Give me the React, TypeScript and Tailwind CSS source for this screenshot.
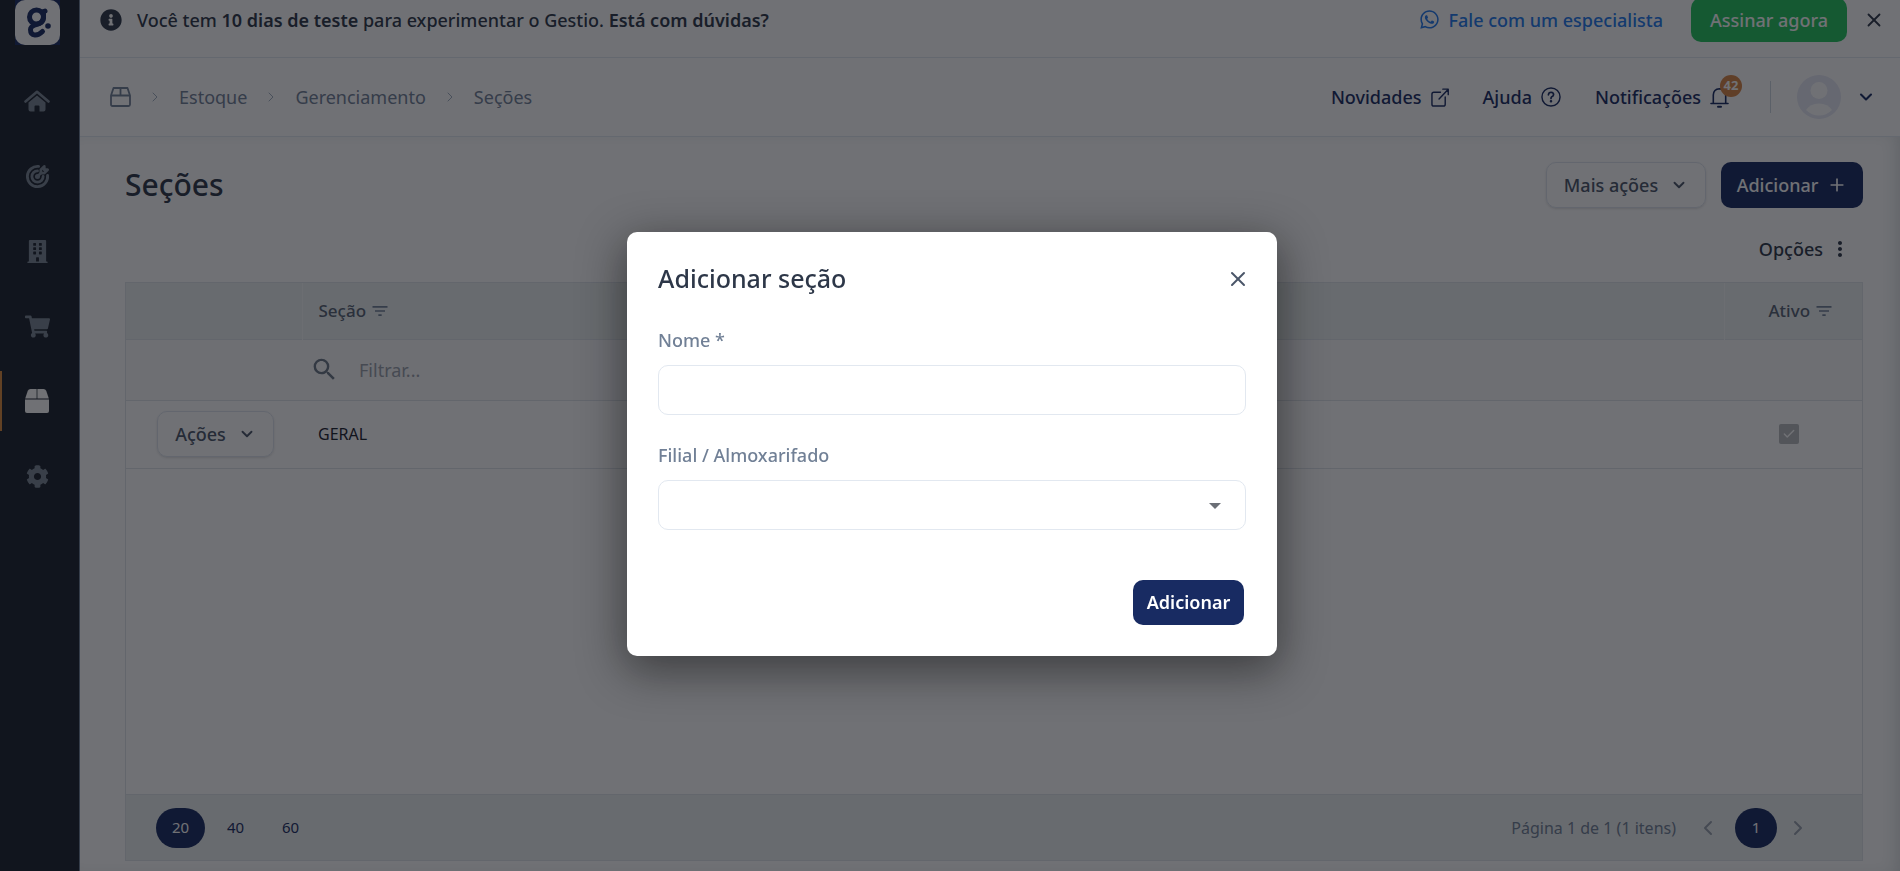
import { useState } from 'react'
import type { ReactNode } from 'react'
import { ChevronDown, ChevronLeft, ChevronRight, Check, Plus, X } from 'lucide-react'
import { FaBuilding, FaCog, FaInfoCircle, FaShoppingCart, FaWhatsapp } from 'react-icons/fa'
import { MdFilterList, MdMoreVert, MdSearch } from 'react-icons/md'
import { TbTargetArrow } from 'react-icons/tb'

function Logo() {
  return (
    <svg width="45" height="45" viewBox="0 0 45 45" className="bg-[#182b62]">
      <rect width="45" height="45" rx="10" fill="#fff" />
      <g fill="none" stroke="#182b62" strokeWidth="5" strokeLinecap="round">
        <circle cx="21.5" cy="17" r="7" />
        <path d="M28.5 17V11.5L30 11" />
        <path d="M28.5 17C28.5 27 15.5 22.5 15.5 29.5C15.5 37 23 36 27.5 31.5" />
      </g>
      <circle cx="33" cy="26" r="2.8" fill="#182b62" />
    </svg>
  )
}

function HomeIcon() {
  return (
    <svg width="26" height="22" viewBox="0 0 26 22">
      <path d="M1.5 11.5L13 1.8L24.5 11.5" fill="none" stroke="currentColor" strokeWidth="2.6" strokeLinecap="round" strokeLinejoin="round" />
      <path d="M4.5 12.5L13 5.5L21.5 12.5V19.5Q21.5 21.5 19.5 21.5H15.5V16.5Q15.5 15.5 14.5 15.5H11.5Q10.5 15.5 10.5 16.5V21.5H6.5Q4.5 21.5 4.5 19.5Z" fill="currentColor" />
    </svg>
  )
}

function BoxIcon() {
  return (
    <svg width="24" height="24" viewBox="0 0 24 24" fill="currentColor">
      <path d="M11.6 0V9.5H0.2L2.8 1.8Q3.5 0 5.5 0Z" />
      <path d="M12.4 0V9.5H23.8L21.2 1.8Q20.5 0 18.5 0Z" />
      <path d="M0 10.5H24V22Q24 24 22 24H2Q0 24 0 22Z" />
    </svg>
  )
}

function BoxOutlineIcon() {
  return (
    <svg width="21" height="20" viewBox="0 0 21 20" fill="none" stroke="currentColor" strokeWidth="1.8" strokeLinejoin="round">
      <path d="M1 8.5L3.5 1H17.5L20 8.5V17.5Q20 19 18.5 19H2.5Q1 19 1 17.5Z" />
      <path d="M1 8.5H20M10.5 1V8.5" />
    </svg>
  )
}

function ExternalIcon() {
  return (
    <svg width="18" height="19" viewBox="0 0 19 20" fill="none" stroke="currentColor" strokeWidth="1.5" strokeLinecap="round" strokeLinejoin="round">
      <path d="M10 4.5H3Q1 4.5 1 6.5V17Q1 19 3 19H13Q15 19 15 17V9.5" />
      <path d="M8.5 11.5L18 1.5M12.5 1.2H18.2V7" />
    </svg>
  )
}

function HelpIcon() {
  return (
    <svg width="20" height="20" viewBox="0 0 21 21" fill="none" stroke="currentColor" strokeWidth="1.5" strokeLinecap="round">
      <circle cx="10.5" cy="10.5" r="9.5" />
      <path d="M7.8 8.2Q8 5.5 10.6 5.5Q13.3 5.7 13.2 8Q13 9.6 11.3 10.3Q10.5 10.7 10.5 12" strokeWidth="1.8" />
      <circle cx="10.5" cy="15" r="0.6" fill="currentColor" />
    </svg>
  )
}

function BellIcon() {
  return (
    <svg width="19" height="21" viewBox="0 0 19 21" fill="none" stroke="currentColor" strokeWidth="1.6" strokeLinecap="round" strokeLinejoin="round">
      <path d="M1 16.5H18M3.3 16.5V8Q3.5 2 9.5 1.7Q15.5 2 15.7 8V16.5" />
      <path d="M8 19.8H11" strokeWidth="2" />
    </svg>
  )
}

function AvatarIcon() {
  return (
    <svg width="44" height="44" viewBox="0 0 44 44">
      <circle cx="22" cy="22" r="22" fill="#e6e9f5" />
      <circle cx="22" cy="15.5" r="8.5" fill="#fff" />
      <path d="M9 35Q13 28.5 22 28.5Q31 28.5 35 35Q29.5 40.5 22 40.5Q14.5 40.5 9 35Z" fill="#fff" />
    </svg>
  )
}

const menu: { label: string; icon: ReactNode; active?: boolean }[] = [
  { label: 'Início', icon: <HomeIcon /> },
  { label: 'Metas', icon: <TbTargetArrow size={27} strokeWidth={2.5} /> },
  { label: 'Empresa', icon: <FaBuilding size={23} /> },
  { label: 'Vendas', icon: <FaShoppingCart size={25} /> },
  { label: 'Estoque', icon: <BoxIcon />, active: true },
  { label: 'Configurações', icon: <FaCog size={23} /> },
]

function Sidebar() {
  return (
    <nav className="w-20 shrink-0 bg-[#1a202c] border-r border-[#718096] flex flex-col">
      <a href="#" aria-label="Gestio" className="self-start ml-[15px]">
        <Logo />
      </a>
      <div className="mt-[26px] flex flex-col gap-[15px]">
        {menu.map((item) => (
          <a
            key={item.label}
            href="#"
            aria-label={item.label}
            className={`h-[60px] pr-[7px] flex items-center justify-center border-l-2 ${item.active ? 'border-[#dd8a3c] text-white' : 'border-transparent text-[#7b8794]'}`}
          >
            {item.icon}
          </a>
        ))}
      </div>
    </nav>
  )
}

function TrialBanner() {
  return (
    <div className="h-[58px] pb-[18px] pl-5 pr-[15px] flex items-center border-b border-[#e2e8f0] text-lg font-medium text-[#2d3748]">
      <FaInfoCircle size={22} />
      <p className="ml-[15px] flex-1">
        Você tem <b className="font-semibold">10 dias de teste</b> para experimentar o Gestio. <b className="font-semibold">Está com dúvidas?</b>
      </p>
      <a href="#" className="flex items-center gap-[9px] text-[#2079ee]">
        <FaWhatsapp size={21} /> Fale com um especialista
      </a>
      <button className="ml-7 h-11 w-[156px] shrink-0 rounded-[10px] bg-[#22c55e] text-white">Assinar agora</button>
      <button aria-label="Fechar aviso" className="ml-4">
        <X size={22} />
      </button>
    </div>
  )
}

function Header() {
  return (
    <header className="h-[79px] pl-[30px] pr-6 flex items-center border-b border-[#e2e8f0] text-lg">
      <nav className="flex flex-1 items-center gap-4 text-[#718096]">
        <BoxOutlineIcon />
        {['Estoque', 'Gerenciamento', 'Seções'].map((crumb) => (
          <span key={crumb} className="flex items-center gap-4">
            <ChevronRight size={16} strokeWidth={1.5} className="text-[#a0aec0]" />
            <a href="#">{crumb}</a>
          </span>
        ))}
      </nav>
      <div className="flex items-center gap-[34px] font-medium text-[#182b62]">
        <a href="#" className="flex items-center gap-[9px]">
          Novidades <ExternalIcon />
        </a>
        <a href="#" className="flex items-center gap-[9px]">
          Ajuda <HelpIcon />
        </a>
        <button className="flex items-center gap-[9px]">
          Notificações
          <span className="relative">
            <BellIcon />
            <span className="absolute -top-3 left-[10px] size-[22px] rounded-full bg-[#d98545] text-white text-[13px] font-bold flex items-center justify-center">42</span>
          </span>
        </button>
      </div>
      <div className="ml-[41px] mr-[26px] w-px h-8 bg-[#cbd5e0]" />
      <button aria-label="Conta" className="flex items-center gap-[15px] text-[#182b62]">
        <AvatarIcon />
        <ChevronDown size={20} strokeWidth={2.5} />
      </button>
    </header>
  )
}

function SectionsTable() {
  return (
    <div className="flex-1 flex flex-col border border-[#dfe4ea]">
      <table className="w-full table-fixed text-[17px]">
        <colgroup>
          <col className="w-[176px]" />
          <col />
          <col className="w-[138px]" />
        </colgroup>
        <thead>
          <tr className="h-14 bg-[#ecf1f0] border-b border-[#dfe4ea] text-[#566273]">
            <th className="border-r border-[#f6f8f8]" />
            <th className="pl-4 border-r border-[#f6f8f8] text-left font-medium">
              <span className="flex items-center gap-1">
                Seção <MdFilterList size={20} className="text-[#718096]" />
              </span>
            </th>
            <th className="font-medium">
              <span className="flex items-center justify-center gap-1 pl-4">
                Ativo <MdFilterList size={20} className="text-[#718096]" />
              </span>
            </th>
          </tr>
        </thead>
        <tbody>
          <tr className="h-[61px] border-b border-[#dfe4ea] bg-[#fafafb]">
            <td />
            <td className="pl-2">
              <label className="flex items-center gap-5">
                <MdSearch size={29} className="text-[#6b7785]" />
                <input placeholder="Filtrar..." aria-label="Filtrar seção" className="flex-1 text-lg outline-none placeholder:text-[#9aa1ab]" />
              </label>
            </td>
            <td />
          </tr>
          <tr className="h-[68px] border-b border-[#dfe4ea]">
            <td className="pl-[31px]">
              <button className="h-[46px] w-[117px] flex items-center justify-center gap-3 rounded-[10px] border border-[#dfe5ee] shadow-sm text-lg font-medium text-[#4a5568]">
                Ações <ChevronDown size={18} strokeWidth={2.5} />
              </button>
            </td>
            <td className="pl-4 text-base text-[#1a202c]">GERAL</td>
            <td className="pr-2">
              <span className="relative mx-auto block size-5">
                <input type="checkbox" checked disabled aria-label="Ativo" className="block size-5 appearance-none rounded-xs bg-[#b9bbbd]" />
                <Check size={14} strokeWidth={2.5} className="absolute left-[3px] top-[3px] text-white" />
              </span>
            </td>
          </tr>
        </tbody>
      </table>
      <div className="flex-1" />
      <div className="h-[66px] pl-[30px] pr-[52px] flex items-center bg-[#ecf1f0] border-t border-[#dfe4ea] text-[15px] text-[#182b62]">
        <div className="flex flex-1 gap-[6px]">
          <button className="h-10 w-[49px] rounded-[20px] bg-[#182b62] text-white">20</button>
          <button className="h-10 w-[49px]">40</button>
          <button className="h-10 w-[49px]">60</button>
        </div>
        <span className="text-base text-[#718096]">Página 1 de 1 (1 itens)</span>
        <button aria-label="Anterior" className="ml-5 mr-[15px] text-[#97a1ad]">
          <ChevronLeft size={24} />
        </button>
        <button className="h-10 w-[42px] rounded-full bg-[#182b62] text-white">1</button>
        <button aria-label="Próxima" className="ml-[9px] text-[#97a1ad]">
          <ChevronRight size={24} />
        </button>
      </div>
    </div>
  )
}

function AddSectionModal({ onClose }: { onClose: () => void }) {
  return (
    <div className="fixed inset-0 flex items-center justify-center bg-[#0c0e15]/59 pt-4 pl-1">
      <div role="dialog" aria-labelledby="modal-title" className="w-[650px] rounded-[10px] bg-white px-[31px] pt-[30px] pb-[31px] shadow-[0_12px_46px_4px_rgba(0,0,0,0.45)]">
        <div className="flex h-[34px] items-center justify-between">
          <h2 id="modal-title" className="text-[25px] font-medium text-[#2d3748]">Adicionar seção</h2>
          <button aria-label="Fechar" onClick={onClose} className="-mr-1 text-[#4a5568]">
            <X size={24} />
          </button>
        </div>
        <form onSubmit={(e) => e.preventDefault()}>
          <label htmlFor="nome" className="mt-8 block text-lg leading-6 font-medium text-[#718096]">Nome *</label>
          <input id="nome" className="mt-[13px] block h-[50px] w-full rounded-[10px] border border-[#e2e8f0] px-4 outline-none" />
          <label htmlFor="filial" className="mt-7 block text-lg leading-6 font-medium text-[#718096]">Filial / Almoxarifado</label>
          <div className="relative mt-[13px]">
            <select id="filial" className="block h-[50px] w-full appearance-none rounded-[10px] border border-[#e2e8f0] px-4 outline-none" />
            <svg width="12" height="6" viewBox="0 0 12 6" className="pointer-events-none absolute right-[25px] top-[23px] text-[#6b6f76]">
              <path d="M0 0H12L6 6Z" fill="currentColor" />
            </svg>
          </div>
          <div className="mt-[50px] flex justify-end pr-0.5">
            <button className="h-[45px] w-[111px] rounded-[10px] bg-[#182b62] text-lg font-semibold text-white">Adicionar</button>
          </div>
        </form>
      </div>
    </div>
  )
}

export default function App() {
  const [open, setOpen] = useState(true)

  return (
    <div className="flex min-h-screen bg-white font-['Noto_Sans',sans-serif]">
      <Sidebar />
      <div className="flex flex-1 flex-col">
        <TrialBanner />
        <Header />
        <main className="flex flex-1 flex-col pt-[25px] pr-[37px] pb-[10px] pl-[45px] shadow-[inset_-10px_0_18px_-8px_rgba(45,70,75,0.2)]">
          <div className="flex items-center gap-[15px] text-lg font-medium">
            <h1 className="flex-1 text-3xl text-[#2d3748]">Seções</h1>
            <button className="h-[46px] w-[160px] flex items-center justify-center gap-3 rounded-[10px] border border-[#dfe5ee] shadow-sm text-[#4a5568]">
              Mais ações <ChevronDown size={18} strokeWidth={2.5} />
            </button>
            <button className="h-[46px] w-[142px] flex items-center justify-center gap-[9px] rounded-[10px] bg-[#182b62] text-white">
              Adicionar <Plus size={20} />
            </button>
          </div>
          <button className="mt-7 mb-5 mr-[11px] self-end flex items-center gap-[5px] text-lg leading-[26px] font-medium text-[#2d3748]">
            Opções <MdMoreVert size={24} />
          </button>
          <SectionsTable />
        </main>
      </div>
      {open && <AddSectionModal onClose={() => setOpen(false)} />}
    </div>
  )
}
